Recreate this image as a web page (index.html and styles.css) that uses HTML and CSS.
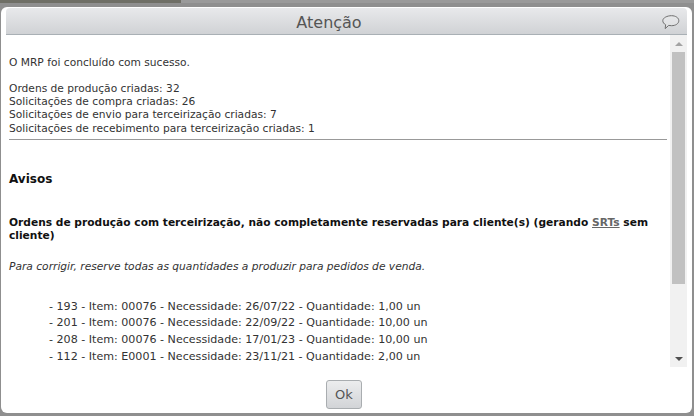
FILE: index.html
```html
<!DOCTYPE html>
<html lang="pt">
<head>
<meta charset="utf-8">
<title>Atenção</title>
<link rel="stylesheet" href="styles.css">
</head>
<body>
<div class="backdrop">
  <div class="dialog">
    <header class="titlebar">
      <h1 class="title">Atenção</h1>
      <svg class="bubble" width="18" height="15" viewBox="0 0 18 15" aria-hidden="true"><path d="M9.500 .7C13.600 .7 16.800 2.800 16.800 5.700s-3.200 5-7.300 5c-1 0-1.900-.1-2.800-.3L3.200 13.600 3.600 9.700C1.900 8.800.8 7.400.8 5.700.8 2.800 5.200.7 9.500.7Z" fill="#fff" fill-opacity=".2" stroke="#6f6f6f" stroke-width="1"/></svg>
    </header>
    <div class="body">
      <div class="content">
        <p class="first">O MRP foi concluído com sucesso.</p>
        <p class="counts">Ordens de produção criadas: 32<br>Solicitações de compra criadas: 26<br>Solicitações de envio para terceirização criadas: 7<br>Solicitações de recebimento para terceirização criadas: 1</p>
        <hr class="rule">
        <h2 class="avisos">Avisos</h2>
        <h3 class="sub">Ordens de produção com terceirização, não completamente reservadas para cliente(s) (gerando <a href="#" class="link">SRTs</a> sem cliente)</h3>
        <p class="hint">Para corrigir, reserve todas as quantidades a produzir para pedidos de venda.</p>
        <ul class="items">
          <li>- 193 - Item: 00076 - Necessidade: 26/07/22 - Quantidade: 1,00 un</li>
          <li>- 201 - Item: 00076 - Necessidade: 22/09/22 - Quantidade: 10,00 un</li>
          <li>- 208 - Item: 00076 - Necessidade: 17/01/23 - Quantidade: 10,00 un</li>
          <li>- 112 - Item: E0001 - Necessidade: 23/11/21 - Quantidade: 2,00 un</li>
        </ul>
      </div>
      <div class="scrollbar">
        <div class="arrow up"></div>
        <div class="track"><div class="thumb"></div></div>
        <div class="arrow down"></div>
      </div>
    </div>
    <footer class="footer"><button class="ok" type="button">Ok</button></footer>
  </div>
</div>
</body>
</html>
```
FILE: styles.css
```css
* { box-sizing: border-box; }
html, body { margin: 0; height: 100%; }
body { overflow: hidden; background: #8f8f8f; }
.backdrop { width: 694px; height: 416px; padding: 7px 2px 3px 1px; background: linear-gradient(90deg, #6f6f66 0, #6f6f66 181px, #9a9a9a 181px) 0 0 / 100% 3px no-repeat, #8f8f8f; }
.dialog { height: 100%; padding: 1px 5px 0; background: #fff; border-radius: 6px; display: flex; flex-direction: column; overflow: hidden; font-family: "DejaVu Sans", sans-serif; font-size: 10.67px; line-height: 13.33px; color: #333; }
.titlebar { height: 27px; flex: none; display: flex; align-items: center; justify-content: center; padding: 4px 35px 0 0; position: relative; background: linear-gradient(#e8e9eb, #d0d2d5); border-bottom: 1px solid #a9b0b5; border-radius: 4px 4px 0 0; }
.title { margin: 0; font-size: 16px; font-weight: 400; color: #555; }
.bubble { position: absolute; right: 7px; top: 7px; }
.body { height: 332px; flex: none; display: flex; }
.content { flex: 1; min-width: 0; overflow: hidden; padding: 0 3px; }
.first { margin: 21px 0 12.5px; }
.counts { margin: 0; }
.rule { margin: 4px 0 0; border: 0; height: 1px; background: #999; }
.avisos { margin: 31.5px 0 0; font-size: 12px; line-height: 14px; color: #111; }
.sub { margin: 30px 0 0; font-size: 10.67px; line-height: 13.33px; color: #111; }
.link { color: #666; }
.hint { margin: 18px 0 0; font-style: italic; }
.items { list-style: none; margin: 25px 0 0; padding: 0 0 0 40px; font-size: 11.1px; }
.items li { height: 16.67px; line-height: 16.67px; }
.scrollbar { width: 17px; flex: none; background: #f1f1f1; display: flex; flex-direction: column; }
.arrow { height: 17px; flex: none; display: flex; align-items: center; justify-content: center; }
.arrow::before { content: ""; border-left: 4px solid transparent; border-right: 4px solid transparent; }
.up::before { border-bottom: 4px solid #a3a3a3; }
.down::before { border-top: 4px solid #505050; }
.track { flex: 1; padding: 0 2px; }
.thumb { height: 232px; background: #c1c1c1; }
.footer { flex: 1; display: flex; justify-content: center; align-items: flex-start; padding: 13px 5px 0 0; }
.ok { width: 36px; height: 29px; padding: 0; border: 1px solid #a9adb0; border-radius: 3px; background: linear-gradient(#ecedee, #d2d4d7); color: #555; font: 13px "DejaVu Sans", sans-serif; }
```
